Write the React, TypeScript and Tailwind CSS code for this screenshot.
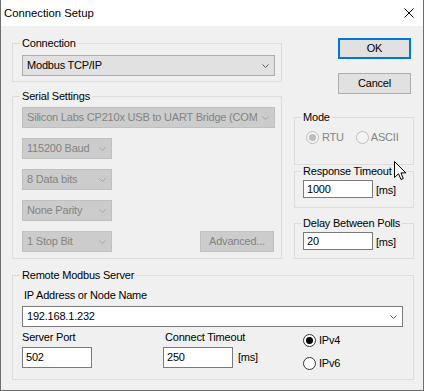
import clsx from "clsx";
import type { ReactNode } from "react";

function Chevron({ disabled }: { disabled?: boolean }) {
  return (
    <svg width="7" height="4" viewBox="0 0 7 4" className="shrink-0">
      <path d="M0.5 0.5 L3.5 3.5 L6.5 0.5" fill="none" stroke={disabled ? "#a6a6a6" : "#5a5a5a"} strokeWidth="1" />
    </svg>
  );
}

function Combo({ text, className, disabled, white }: { text: string; className?: string; disabled?: boolean; white?: boolean }) {
  return (
    <div
      className={clsx(
        "flex h-[21px] min-w-0 items-center border",
        disabled && "border-[#bfbfbf] bg-[#cccccc] text-[#838383]",
        white && "border-[#7a7a7a] bg-white",
        !disabled && !white && "border-[#adadad] bg-[#e1e1e1]",
        className
      )}
    >
      <span className="min-w-0 flex-1 overflow-hidden whitespace-nowrap pl-[4px] leading-[13px]">{text}</span>
      <span className="flex w-[17px] shrink-0 justify-center">
        <Chevron disabled={disabled} />
      </span>
    </div>
  );
}

function TextBox({ value, className }: { value: string; className?: string }) {
  return (
    <div className={clsx("flex w-[70px] shrink-0 items-center border border-[#7a7a7a] bg-white pl-[3px] leading-[13px]", className)}>
      {value}
    </div>
  );
}

function Radio({ checked, disabled }: { checked?: boolean; disabled?: boolean }) {
  return (
    <svg width="13" height="13" viewBox="0 0 13 13" className="shrink-0">
      <circle cx="6.5" cy="6.5" r="6" fill={disabled ? "#f4f4f4" : "#ffffff"} stroke={disabled ? "#bcbcbc" : "#333333"} />
      {checked && <circle cx="6.5" cy="6.5" r="3.5" fill={disabled ? "#bcbcbc" : "#000000"} />}
    </svg>
  );
}

function Group({ title, className, children }: { title: string; className?: string; children: ReactNode }) {
  return (
    <fieldset className={clsx("min-w-0 border border-[#dcdcdc]", className)}>
      <legend className="ml-[-2px] whitespace-nowrap px-[2px] leading-[13px]">{title}</legend>
      {children}
    </fieldset>
  );
}

export default function App() {
  return (
    <div className="relative flex h-[391px] w-[424px] flex-col border-x border-b border-[#6e6e6e] bg-[#f0f0f0] font-['Liberation_Sans',Arial,sans-serif] text-[11px] tracking-[-0.2px] text-black">
      {/* title bar */}
      <div className="flex h-[26px] shrink-0 items-center justify-between bg-white pl-[3px] pr-[9px]">
        <span className="text-[11.3px] leading-[13px] tracking-normal">Connection Setup</span>
        <svg width="10" height="10" viewBox="0 0 10 10">
          <path d="M0.5 0.5 L9.5 9.5 M9.5 0.5 L0.5 9.5" stroke="#000" strokeWidth="1" />
        </svg>
      </div>

      <div className="flex flex-col pl-[11px] pr-[9px] pt-[11px]">
        <div className="flex gap-[12px]">
          {/* left column */}
          <div className="flex w-[270px] shrink-0 flex-col">
            <Group title="Connection" className="pb-[5px] pl-[9px] pr-[6px] pt-[5px]">
              <Combo text="Modbus TCP/IP" />
            </Group>

            <Group title="Serial Settings" className="mt-[8px] pb-[6px] pl-[9px] pr-[6px] pt-[4px]">
              <div className="flex flex-col gap-[10px]">
                <Combo text="Silicon Labs CP210x USB to UART Bridge (COM5)" disabled />
                <Combo text="115200 Baud" disabled className="w-[90px]" />
                <Combo text="8 Data bits" disabled className="w-[90px]" />
                <Combo text="None Parity" disabled className="w-[90px]" />
                <div className="flex items-center justify-between">
                  <Combo text="1 Stop Bit" disabled className="w-[90px]" />
                  <div className="mr-[1px] flex h-[21px] w-[74px] items-center justify-center border border-[#bfbfbf] bg-[#cccccc] text-[#838383]">
                    Advanced...
                  </div>
                </div>
              </div>
            </Group>
          </div>

          {/* right column */}
          <div className="flex w-[120px] shrink-0 flex-col">
            <div className="flex flex-col items-end pr-[3px] pt-[1px]">
              <div className="flex h-[21px] w-[73px] items-center justify-center border-2 border-[#0078d7] bg-[#e1e1e1]">OK</div>
              <div className="mt-[14px] flex h-[21px] w-[73px] items-center justify-center border border-[#adadad] bg-[#e1e1e1]">
                Cancel
              </div>
            </div>

            <Group title="Mode" className="mt-[17px] pb-[20px] pl-[8px] pt-[7px]">
              <div className="flex items-center pl-[3px] text-[#838383]">
                <span className="flex items-center gap-[3px]">
                  <Radio checked disabled />
                  <span className="leading-[13px]">RTU</span>
                </span>
                <span className="ml-[12px] flex items-center gap-[2px]">
                  <Radio disabled />
                  <span className="leading-[13px]">ASCII</span>
                </span>
              </div>
            </Group>

            <Group title="Response Timeout" className="pb-[9px] pl-[8px] pt-[2px]">
              <div className="flex items-center gap-[3px]">
                <TextBox value="1000" className="h-[18px]" />
                <span className="pt-[3px] leading-[13px]">[ms]</span>
              </div>
            </Group>

            <Group title="Delay Between Polls" className="mt-[9px] pb-[8px] pl-[8px] pt-[2px]">
              <div className="flex items-center gap-[3px]">
                <TextBox value="20" className="h-[18px]" />
                <span className="pt-[3px] leading-[13px]">[ms]</span>
              </div>
            </Group>
          </div>
        </div>

        <Group title="Remote Modbus Server" className="mt-[10px] pb-[9px] pl-[9px] pr-[10px] pt-[7px]">
          <div className="pl-[2px] leading-[13px]">IP Address or Node Name</div>
          <Combo text="192.168.1.232" white className="mt-[4px]" />
          <div className="mt-[4px] flex items-start">
            <div className="flex w-[141px] shrink-0 flex-col">
              <span className="leading-[13px]">Server Port</span>
              <TextBox value="502" className="mt-[3px] h-[21px]" />
            </div>
            <div className="flex w-[140px] shrink-0 flex-col">
              <span className="pl-[2px] leading-[13px]">Connect Timeout</span>
              <div className="mt-[3px] flex items-center gap-[5px]">
                <TextBox value="250" className="h-[21px]" />
                <span className="leading-[13px]">[ms]</span>
              </div>
            </div>
            <div className="flex flex-col gap-[10px] pt-[3px]">
              <span className="flex items-center gap-[3px]">
                <Radio checked />
                <span className="leading-[13px]">IPv4</span>
              </span>
              <span className="flex items-center gap-[3px]">
                <Radio />
                <span className="leading-[13px]">IPv6</span>
              </span>
            </div>
          </div>
        </Group>
      </div>

      {/* mouse pointer */}
      <svg width="13" height="20" viewBox="0 0 13 20" className="absolute left-[393px] top-[161px]">
        <path d="M0.5 0.5 L0.5 16.5 L4.5 12.8 L7 18.5 L9.3 17.5 L6.9 11.9 L11.8 11.9 Z" fill="#ffffff" stroke="#000000" strokeWidth="1" strokeLinejoin="miter" />
      </svg>
    </div>
  );
}
